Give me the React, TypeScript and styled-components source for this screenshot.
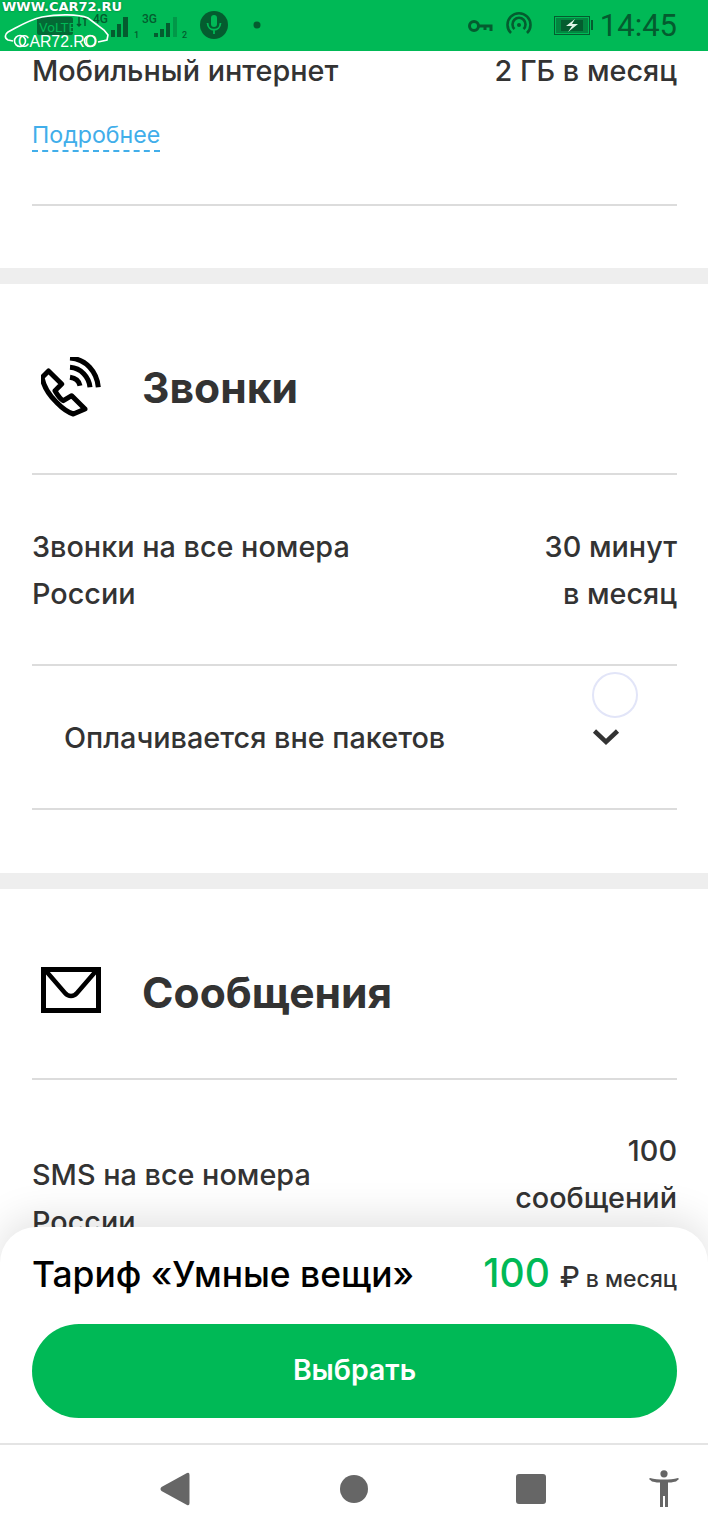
import React from 'react';
import styled, { createGlobalStyle } from 'styled-components';

const GlobalStyle = createGlobalStyle`
  html, body {
    margin: 0;
    padding: 0;
    background: #fff;
    font-family: Inter, "Noto Sans", sans-serif;
  }
`;

const DARK = '#045c2f';

const Screen = styled.div`
  position: relative;
  width: 708px;
  height: 1536px;
  display: flex;
  flex-direction: column;
  overflow: hidden;
  background: #fff;
`;

const StatusBar = styled.div`
  position: relative;
  flex: none;
  height: 51px;
  background: #00b956;
  display: flex;
  align-items: center;
  justify-content: space-between;
  padding: 0 31px 0 37px;
  box-sizing: border-box;
  z-index: 3;
`;

const StatusGroup = styled.div`
  display: flex;
  align-items: center;
`;

const Clock = styled.span`
  font-family: Roboto, sans-serif;
  font-size: 31px;
  line-height: 51px;
  color: ${DARK};
  margin-left: 7px;
`;

const Watermark = styled.div`
  position: absolute;
  left: 2px;
  top: 0;
  font-family: "DejaVu Sans", sans-serif;
  font-weight: 700;
  font-size: 13px;
  line-height: 14px;
  color: #fff;
  text-shadow: 0 0 2px rgba(0, 60, 30, 0.6);
`;

const WatermarkCar = styled.div`
  position: absolute;
  left: 0;
  top: 10px;
  line-height: 0;
`;

const Content = styled.div`
  flex: 1;
  min-height: 0;
  overflow: hidden;
`;

const Section = styled.section<{ $first?: boolean }>`
  padding: 0 31px 0 32px;
  ${p => (p.$first ? 'margin-top: -4px;' : '')}
`;

const Band = styled.div`
  height: 16px;
  background: #eeeeee;
`;

const Divider = styled.div<{ $mt?: number; $mb?: number }>`
  height: 2px;
  background: #dcdcdc;
  margin-top: ${p => p.$mt ?? 0}px;
  margin-bottom: ${p => p.$mb ?? 0}px;
`;

const SectionHeader = styled.div`
  display: flex;
  align-items: center;
  height: 189px;
  box-sizing: border-box;
  padding-top: 19px;
`;

const SectionIcon = styled.div<{ $shift: number }>`
  width: 110px;
  display: flex;
  align-items: center;
  padding-left: 9px;
  box-sizing: border-box;
  margin-top: ${p => p.$shift}px;
`;

const SectionTitle = styled.h2`
  margin: 0;
  font-size: 42.6px;
  line-height: 50px;
  font-weight: 700;
  color: #333;
`;

const Row = styled.div<{ $align?: string }>`
  display: flex;
  justify-content: space-between;
  align-items: ${p => p.$align ?? 'flex-start'};
  font-size: 28.8px;
  line-height: 47px;
  font-weight: 500;
  color: #333;
`;

const RowLeft = styled.div`
  max-width: 360px;
`;

const RowRight = styled.div`
  text-align: right;
`;

const DetailsLink = styled.a`
  display: inline-block;
  margin-top: 27px;
  font-size: 23.2px;
  line-height: 29px;
  color: #41aeea;
  border-bottom: 2px dashed #41aeea;
`;

const Collapse = styled.div`
  display: flex;
  align-items: center;
  justify-content: space-between;
  height: 142px;
  padding: 0 57px 0 32px;
  font-size: 28.8px;
  font-weight: 500;
  color: #333;
`;

const Spinner = styled.div`
  position: absolute;
  left: 592px;
  top: 672px;
  width: 46px;
  height: 46px;
  box-sizing: border-box;
  border-radius: 50%;
  border: 2px solid #e2e5f8;
`;

const Sheet = styled.div`
  position: absolute;
  left: 0;
  right: 0;
  top: 1227px;
  height: 216px;
  box-sizing: border-box;
  padding: 0 31px 0 32px;
  background: #fff;
  border-radius: 36px 36px 0 0;
  box-shadow: 0 -8px 40px rgba(0, 0, 0, 0.12);
  z-index: 2;
`;

const SheetRow = styled.div`
  display: flex;
  align-items: baseline;
  justify-content: space-between;
  height: 97px;
  padding-top: 22px;
  box-sizing: border-box;
`;

const TariffName = styled.div`
  font-size: 35.4px;
  line-height: 48px;
  font-weight: 500;
  color: #000;
  white-space: nowrap;
`;

const PriceBox = styled.div`
  white-space: nowrap;
  font-size: 23px;
  font-weight: 500;
  color: #333;
`;

const PriceValue = styled.span`
  font-size: 39px;
  font-weight: 500;
  color: #00b956;
  margin-right: 10px;
`;

const Ruble = styled.span`
  font-size: 28px;
  margin-right: 6px;
`;

const SelectButton = styled.button`
  display: block;
  width: 100%;
  height: 94px;
  border: none;
  border-radius: 47px;
  padding: 0 0 4px;
  background: #00b956;
  color: #fff;
  font-family: inherit;
  font-size: 28.4px;
  font-weight: 600;
`;

const NavBar = styled.div`
  flex: none;
  position: relative;
  z-index: 2;
  height: 93px;
  box-sizing: border-box;
  border-top: 2px solid #e4e4e4;
  background: #fff;
  display: grid;
  grid-template-columns: 180px 176px 132px 60px;
  padding: 0 0 4px 160px;
  align-items: center;
`;

const CallIcon = () => (
  <svg width="60" height="60" viewBox="0 0 60 60" fill="none" stroke="#000" strokeWidth="5" strokeLinejoin="round" strokeLinecap="butt">
    <path d="M7.5 14 L1 20.5 C3 31 9 39 15.7 45.5 C21 51 26 55 32.3 57 L44 52 L30.7 38.7 L22.3 43.7 C18 41 16 37 14 33.7 L20.7 27 Z" />
    <path d="M29 20.3 C34 21 38 24 39 28.7" />
    <path d="M29 10.3 C40 11 48 20 49 30.3" />
    <path d="M29 1 C45 2 56 15 57.3 30.3" />
  </svg>
);

const MailIcon = () => (
  <svg width="60" height="46" viewBox="0 0 60 46" fill="none" stroke="#000">
    <rect x="2.5" y="2.5" width="55" height="41" strokeWidth="5" />
    <path d="M5 4 L24 26 C27.5 30 32.5 30 36 26 L55 4" strokeWidth="4.5" />
  </svg>
);

const Chevron = () => (
  <svg width="28" height="18" viewBox="0 0 28 18" fill="none" stroke="#333" strokeWidth="4.5">
    <path d="M2.5 3 L14 14 L25.5 3" />
  </svg>
);

const SignalIcons = () => (
  <svg width="230" height="51" viewBox="37 0 230 51">
    <rect x="37" y="17" width="36" height="18" rx="2" fill={DARK} opacity="0.85" />
    <text x="39" y="32" fontSize="13.5" fontFamily="Roboto, sans-serif" fill="#00b956">VoLTE</text>
    <path d="M79 17 V26 M77 24 L79 26 L81 24 M85 26 V17 M83 19 L85 17 L87 19" stroke={DARK} strokeWidth="1.5" fill="none" />
    <text x="93" y="23" fontSize="12" fontWeight="500" fontFamily="Roboto, sans-serif" fill={DARK}>4G</text>
    <rect x="111" y="30" width="4" height="7" fill={DARK} />
    <rect x="117" y="24" width="4" height="13" fill={DARK} />
    <rect x="123" y="17" width="5" height="20" fill={DARK} />
    <text x="134" y="38" fontSize="9" fontWeight="500" fontFamily="Roboto, sans-serif" fill={DARK}>1</text>
    <text x="142" y="23" fontSize="12" fontWeight="500" fontFamily="Roboto, sans-serif" fill={DARK}>3G</text>
    <rect x="154" y="33" width="4" height="4" fill={DARK} />
    <rect x="160" y="29" width="4" height="8" fill={DARK} />
    <rect x="166" y="23" width="4" height="14" fill={DARK} />
    <rect x="173" y="17" width="4" height="20" fill={DARK} opacity="0.35" />
    <text x="182" y="38" fontSize="9" fontWeight="500" fontFamily="Roboto, sans-serif" fill={DARK}>2</text>
    <circle cx="214" cy="25" r="14" fill={DARK} />
    <rect x="211" y="15" width="6" height="12" rx="3" fill="#00b956" />
    <path d="M207.5 23 C208 32 220 32 220.5 23 M214 30 V34" stroke="#00b956" strokeWidth="1.8" fill="none" />
    <circle cx="257" cy="25" r="3.5" fill={DARK} />
  </svg>
);

const RightIcons = () => (
  <svg width="125" height="51" viewBox="467 0 125 51" fill="none">
    <circle cx="473" cy="26" r="4.5" stroke={DARK} strokeWidth="3" />
    <path d="M477 26 H490 V31 M484 26 V30" stroke={DARK} strokeWidth="3" />
    <path d="M510 33 A11.5 11.5 0 1 1 526 33" stroke={DARK} strokeWidth="2.6" />
    <path d="M513.5 29 A6.5 6.5 0 1 1 522.5 29" stroke={DARK} strokeWidth="2.6" />
    <circle cx="518" cy="25" r="2" fill={DARK} />
    <rect x="553.5" y="16.5" width="35" height="18" stroke={DARK} />
    <rect x="555" y="18" width="32" height="15" fill={DARK} opacity="0.55" />
    <rect x="560" y="20" width="22" height="11" fill={DARK} />
    <path d="M574 19 L565 26 L571 26 L567 32 L577 24 L571 24 Z" fill="#dff3e6" />
    <rect x="590" y="20" width="2" height="10" fill={DARK} />
  </svg>
);

const CarMark = () => (
  <svg width="125" height="44" viewBox="0 0 125 44" fill="none">
    <path d="M13 31 L8 30 C4 28 5 24 8 22 C18 17 28 10 42 7 C58 4 78 4 88 8 L104 20 L108 25 L107 30 L98 32" stroke="#fff" strokeWidth="1.6" />
    <circle cx="20" cy="31" r="5.5" stroke="#fff" strokeWidth="1.6" />
    <circle cx="90" cy="31" r="5.5" stroke="#fff" strokeWidth="1.6" />
    <text x="18" y="37" fontSize="17" textLength="79" lengthAdjust="spacingAndGlyphs" fontFamily="Liberation Sans, sans-serif" fill="#fff">CAR72.RO</text>
  </svg>
);

const BackIcon = () => (
  <svg width="30" height="34" viewBox="0 0 30 34" fill="#666">
    <path d="M27 1 Q29.5 0 29.5 3 V31 Q29.5 34 27 33 L1.5 19 Q-0.5 17 1.5 15 Z" />
  </svg>
);

const HomeIcon = () => (
  <svg width="28" height="28" viewBox="0 0 28 28" fill="#666">
    <circle cx="14" cy="14" r="14" />
  </svg>
);

const RecentIcon = () => (
  <svg width="30" height="30" viewBox="0 0 30 30" fill="#666">
    <rect width="30" height="30" rx="3" />
  </svg>
);

const AccessIcon = () => (
  <svg width="32" height="38" viewBox="0 0 32 38" fill="#666">
    <circle cx="16" cy="3.8" r="3.6" />
    <path d="M1 9 L4 11.5 C8 12.5 10 12.5 12 12.5 V37 H15 V26 H17 V37 H20 V12.5 C22 12.5 24 12.5 28 11.5 L31 9 L30 8 C22 10 10 10 2 8 Z" />
  </svg>
);

const App: React.FC = () => (
  <Screen>
    <GlobalStyle />
    <StatusBar>
      <StatusGroup>
        <SignalIcons />
      </StatusGroup>
      <StatusGroup>
        <RightIcons />
        <Clock>14:45</Clock>
      </StatusGroup>
      <WatermarkCar>
        <CarMark />
      </WatermarkCar>
      <Watermark>WWW.CAR72.RU</Watermark>
    </StatusBar>

    <Content>
      <Section $first>
        <Row>
          <RowLeft>Мобильный интернет</RowLeft>
          <RowRight>2 ГБ в месяц</RowRight>
        </Row>
        <DetailsLink>Подробнее</DetailsLink>
        <Divider $mt={52} $mb={62} />
      </Section>
      <Band />

      <Section>
        <SectionHeader>
          <SectionIcon $shift={-2}>
            <CallIcon />
          </SectionIcon>
          <SectionTitle>Звонки</SectionTitle>
        </SectionHeader>
        <Divider $mb={48} />
        <Row>
          <RowLeft>Звонки на все номера России</RowLeft>
          <RowRight>
            30 минут
            <br />в месяц
          </RowRight>
        </Row>
        <Divider $mt={47} />
        <Collapse>
          Оплачивается вне пакетов
          <Chevron />
        </Collapse>
        <Divider $mb={63} />
      </Section>
      <Band />

      <Section>
        <SectionHeader>
          <SectionIcon $shift={-6}>
            <MailIcon />
          </SectionIcon>
          <SectionTitle>Сообщения</SectionTitle>
        </SectionHeader>
        <Divider $mb={47} />
        <Row $align="center">
          <RowLeft>SMS на все номера России</RowLeft>
          <RowRight>
            100
            <br />
            сообщений
            <br />в месяц
          </RowRight>
        </Row>
      </Section>
    </Content>

    <Spinner />

    <Sheet>
      <SheetRow>
        <TariffName>Тариф «Умные вещи»</TariffName>
        <PriceBox>
          <PriceValue>100</PriceValue>
          <Ruble>₽</Ruble>в месяц
        </PriceBox>
      </SheetRow>
      <SelectButton>Выбрать</SelectButton>
    </Sheet>

    <NavBar>
      <BackIcon />
      <HomeIcon />
      <RecentIcon />
      <AccessIcon />
    </NavBar>
  </Screen>
);

export default App;
